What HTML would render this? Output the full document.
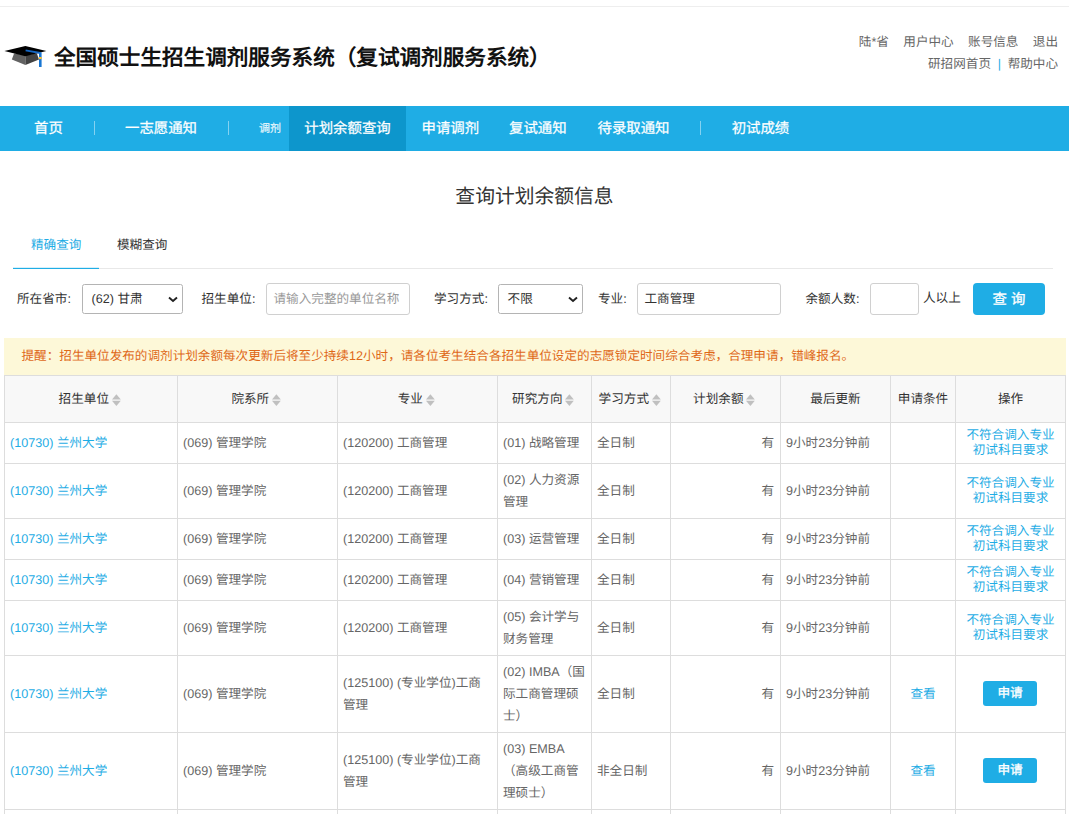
<!DOCTYPE html>
<html lang="zh-CN">
<head>
<meta charset="utf-8">
<title>全国硕士生招生调剂服务系统</title>
<style>
*{box-sizing:border-box;margin:0;padding:0}
html,body{width:1069px;height:814px;overflow:hidden;background:#fff}
body{position:relative;text-rendering:geometricPrecision;font-family:"Liberation Sans",sans-serif;font-size:12.6px;color:#666;line-height:22px}
a{color:#1fade5;text-decoration:none}
.abs{position:absolute;white-space:nowrap}
.topline{left:0;top:6px;width:1069px;height:1px;background:#eeeeee}
.title{left:54px;top:42.7px;height:30px;line-height:30px;font-size:21.6px;font-weight:bold;color:#111}
.hlinks{right:11px;top:31px;text-align:right;font-size:12.6px;line-height:22px;color:#666}
.hlinks span{margin-left:14.4px}
.hlinks .bar{color:#1fade5;margin:0 6.7px}
.nav{left:0;top:106px;width:1069px;height:45px;background:#1fade5;color:#fff;font-size:14.4px;line-height:47.6px}
.nav .it{position:absolute;top:0;height:45px;-webkit-text-stroke:0.25px #fff}
.nav .sep{position:absolute;top:15px;width:1px;height:14px;background:rgba(255,255,255,.45)}
.nav .on{background:#0d96cc;text-align:center}
.h2{left:0;top:182px;width:1069px;text-align:center;font-size:19.8px;line-height:30px;color:#333}
.tabline{left:13px;top:268px;width:1040px;height:1px;background:#e8e8e8}
.tabon{left:13px;top:267px;width:86px;height:2px;background:linear-gradient(rgba(31,173,229,.18) 50%,#1fade5 50%)}
.tab{top:234px;line-height:22px;font-size:12.6px;color:#333}
.lbl{top:288px;line-height:22px;color:#333;font-size:12.6px}
.inp{top:283px;height:31.5px;border:1px solid #d0d0d0;border-radius:3px;background:#fff;line-height:31.5px;padding-left:6.5px;color:#333;font-size:12.6px}
.sel{top:284px;height:30px;border:1px solid #b4b4b4;border-radius:2.5px;background:#fff;line-height:29.6px;padding-left:8.6px;color:#333;font-size:12.6px}
.btn{left:973px;top:283px;width:72px;height:31.5px;border-radius:4px;background:#1fade5;color:#fff;font-size:14.4px;line-height:35.6px;text-align:center;-webkit-text-stroke:0.3px #fff}
.notice{left:4px;top:338px;width:1062px;height:37px;background:#fdf8d8;color:#df6818;font-size:12.6px;line-height:36px;padding-left:17.5px}
table{position:absolute;left:4px;top:375px;width:1062px;table-layout:fixed;border-collapse:separate;border-spacing:0;border-right:1px solid #dddddd;font-size:12.6px}
td,th{border-left:1px solid #dddddd;border-top:1px solid #dddddd;padding:0 5px;vertical-align:middle;text-align:left;font-weight:normal;line-height:22px;color:#666;white-space:nowrap;overflow:hidden}
th{background:#f8f8f8;color:#333;text-align:center;white-space:nowrap}
td.r{text-align:right;padding-right:6px}
td.c{text-align:center}
td.op{text-align:center;line-height:15px;color:#1fade5}
.sort{display:inline-block;width:9px;height:12px;margin-left:3px;margin-right:2.4px;vertical-align:-2.9px}
.apply{display:inline-block;position:relative;left:-0.5px;top:-0.5px;width:54px;height:25px;line-height:25px;border-radius:3px;background:#1fade5;color:#fff;font-size:12.6px;-webkit-text-stroke:0.35px #fff;vertical-align:middle}
</style>
</head>
<body>
<div class="abs topline"></div>
<svg class="abs" style="left:0;top:40px" width="56" height="32" viewBox="0 40 56 32">
<polygon points="14.1,53.5 25.4,55 25.4,64.9 11.8,59.6" fill="#626262"/>
<polygon points="25.4,55 36.9,53.5 39,59.6 25.4,64.9" fill="#424242"/>
<polygon points="4.4,51 25.4,46 46.4,51 25.4,56.2" fill="#000"/>
<path d="M25.6 50.4 L40.3 53" stroke="#1565c0" stroke-width="1.8" fill="none"/>
<rect x="39" y="52.3" width="2.6" height="14.7" fill="#1976d2"/>
<rect x="39" y="57" width="2.6" height="2.1" fill="#fbc02d"/>
</svg>
<div class="abs title">全国硕士生招生调剂服务系统（复试调剂服务系统）</div>
<div class="abs hlinks"><div><span>陆*省</span><span>用户中心</span><span>账号信息</span><span>退出</span></div><div>研招网首页<span class="bar">|</span>帮助中心</div></div>

<div class="abs nav">
<div class="it" style="left:34px">首页</div>
<div class="sep" style="left:94px"></div>
<div class="it" style="left:125px">一志愿通知</div>
<div class="sep" style="left:228px"></div>
<div class="it" style="left:259px;font-size:11px;color:rgba(255,255,255,.75)">调剂</div>
<div class="it on" style="left:289px;width:117px">计划余额查询</div>
<div class="it" style="left:421.5px">申请调剂</div>
<div class="it" style="left:509px">复试通知</div>
<div class="it" style="left:597.5px">待录取通知</div>
<div class="sep" style="left:700px"></div>
<div class="it" style="left:731.7px">初试成绩</div>
</div>

<div class="abs h2">查询计划余额信息</div>
<div class="abs tabline"></div>
<div class="abs tabon"></div>
<div class="abs tab" style="left:31px;color:#1fade5">精确查询</div>
<div class="abs tab" style="left:117px">模糊查询</div>

<div class="abs lbl" style="left:17px">所在省市:</div>
<div class="abs sel" style="left:82px;width:101px">(62) 甘肃</div>
<svg class="abs" style="left:168px;top:295.9px" width="10" height="7" viewBox="0 0 10 7"><path d="M1 1.5 L5 5 L9 1.5" stroke="#222" stroke-width="1.9" fill="none"/></svg>
<div class="abs lbl" style="left:201.5px">招生单位:</div>
<div class="abs inp" style="left:266px;width:144px;color:#999">请输入完整的单位名称</div>
<div class="abs lbl" style="left:434px">学习方式:</div>
<div class="abs sel" style="left:498px;width:85px">不限</div>
<svg class="abs" style="left:568px;top:295.9px" width="10" height="7" viewBox="0 0 10 7"><path d="M1 1.5 L5 5 L9 1.5" stroke="#222" stroke-width="1.9" fill="none"/></svg>
<div class="abs lbl" style="left:598px">专业:</div>
<div class="abs inp" style="left:637px;width:144px">工商管理</div>
<div class="abs lbl" style="left:805.5px">余额人数:</div>
<div class="abs inp" style="left:870px;width:49px"></div>
<div class="abs lbl" style="left:923px;top:286.5px">人以上</div>
<div class="abs btn">查 询</div>

<div class="abs notice">提醒：招生单位发布的调剂计划余额每次更新后将至少持续12小时，请各位考生结合各招生单位设定的志愿锁定时间综合考虑，合理申请，错峰报名。</div>

<table>
<colgroup><col style="width:173px"><col style="width:160px"><col style="width:160px"><col style="width:94px"><col style="width:79px"><col style="width:110px"><col style="width:110px"><col style="width:65px"><col style="width:110px"></colgroup>
<tr style="height:47px"><th>招生单位<svg class="sort" viewBox="0 0 9 12"><polygon points="0,5.4 4.4,0.3 8.8,5.4" fill="#c0c0c0"/><polygon points="0,6.8 4.4,11.9 8.8,6.8" fill="#c0c0c0"/></svg></th><th>院系所<svg class="sort" viewBox="0 0 9 12"><polygon points="0,5.4 4.4,0.3 8.8,5.4" fill="#c0c0c0"/><polygon points="0,6.8 4.4,11.9 8.8,6.8" fill="#c0c0c0"/></svg></th><th>专业<svg class="sort" viewBox="0 0 9 12"><polygon points="0,5.4 4.4,0.3 8.8,5.4" fill="#c0c0c0"/><polygon points="0,6.8 4.4,11.9 8.8,6.8" fill="#c0c0c0"/></svg></th><th>研究方向<svg class="sort" viewBox="0 0 9 12"><polygon points="0,5.4 4.4,0.3 8.8,5.4" fill="#c0c0c0"/><polygon points="0,6.8 4.4,11.9 8.8,6.8" fill="#c0c0c0"/></svg></th><th>学习方式<svg class="sort" viewBox="0 0 9 12"><polygon points="0,5.4 4.4,0.3 8.8,5.4" fill="#c0c0c0"/><polygon points="0,6.8 4.4,11.9 8.8,6.8" fill="#c0c0c0"/></svg></th><th>计划余额<svg class="sort" viewBox="0 0 9 12"><polygon points="0,5.4 4.4,0.3 8.8,5.4" fill="#c0c0c0"/><polygon points="0,6.8 4.4,11.9 8.8,6.8" fill="#c0c0c0"/></svg></th><th>最后更新</th><th>申请条件</th><th>操作</th></tr>
<tr style="height:41px"><td><a>(10730) 兰州大学</a></td><td>(069) 管理学院</td><td>(120200) 工商管理</td><td>(01) 战略管理</td><td>全日制</td><td class="r">有</td><td>9小时23分钟前</td><td class="c"></td><td class="op">不符合调入专业<br>初试科目要求</td></tr>
<tr style="height:55px"><td><a>(10730) 兰州大学</a></td><td>(069) 管理学院</td><td>(120200) 工商管理</td><td>(02) 人力资源<br>管理</td><td>全日制</td><td class="r">有</td><td>9小时23分钟前</td><td class="c"></td><td class="op">不符合调入专业<br>初试科目要求</td></tr>
<tr style="height:41px"><td><a>(10730) 兰州大学</a></td><td>(069) 管理学院</td><td>(120200) 工商管理</td><td>(03) 运营管理</td><td>全日制</td><td class="r">有</td><td>9小时23分钟前</td><td class="c"></td><td class="op">不符合调入专业<br>初试科目要求</td></tr>
<tr style="height:41px"><td><a>(10730) 兰州大学</a></td><td>(069) 管理学院</td><td>(120200) 工商管理</td><td>(04) 营销管理</td><td>全日制</td><td class="r">有</td><td>9小时23分钟前</td><td class="c"></td><td class="op">不符合调入专业<br>初试科目要求</td></tr>
<tr style="height:55px"><td><a>(10730) 兰州大学</a></td><td>(069) 管理学院</td><td>(120200) 工商管理</td><td>(05) 会计学与<br>财务管理</td><td>全日制</td><td class="r">有</td><td>9小时23分钟前</td><td class="c"></td><td class="op">不符合调入专业<br>初试科目要求</td></tr>
<tr style="height:77px"><td><a>(10730) 兰州大学</a></td><td>(069) 管理学院</td><td>(125100) (专业学位)工商<br>管理</td><td>(02) IMBA（国<br>际工商管理硕<br>士）</td><td>全日制</td><td class="r">有</td><td>9小时23分钟前</td><td class="c"><a>查看</a></td><td class="op"><span class="apply">申请</span></td></tr>
<tr style="height:77px"><td><a>(10730) 兰州大学</a></td><td>(069) 管理学院</td><td>(125100) (专业学位)工商<br>管理</td><td>(03) EMBA<br>（高级工商管<br>理硕士）</td><td>非全日制</td><td class="r">有</td><td>9小时23分钟前</td><td class="c"><a>查看</a></td><td class="op"><span class="apply">申请</span></td></tr>
<tr style="height:41px"><td></td><td></td><td></td><td></td><td></td><td></td><td></td><td></td><td></td></tr>
</table>
</body>
</html>
